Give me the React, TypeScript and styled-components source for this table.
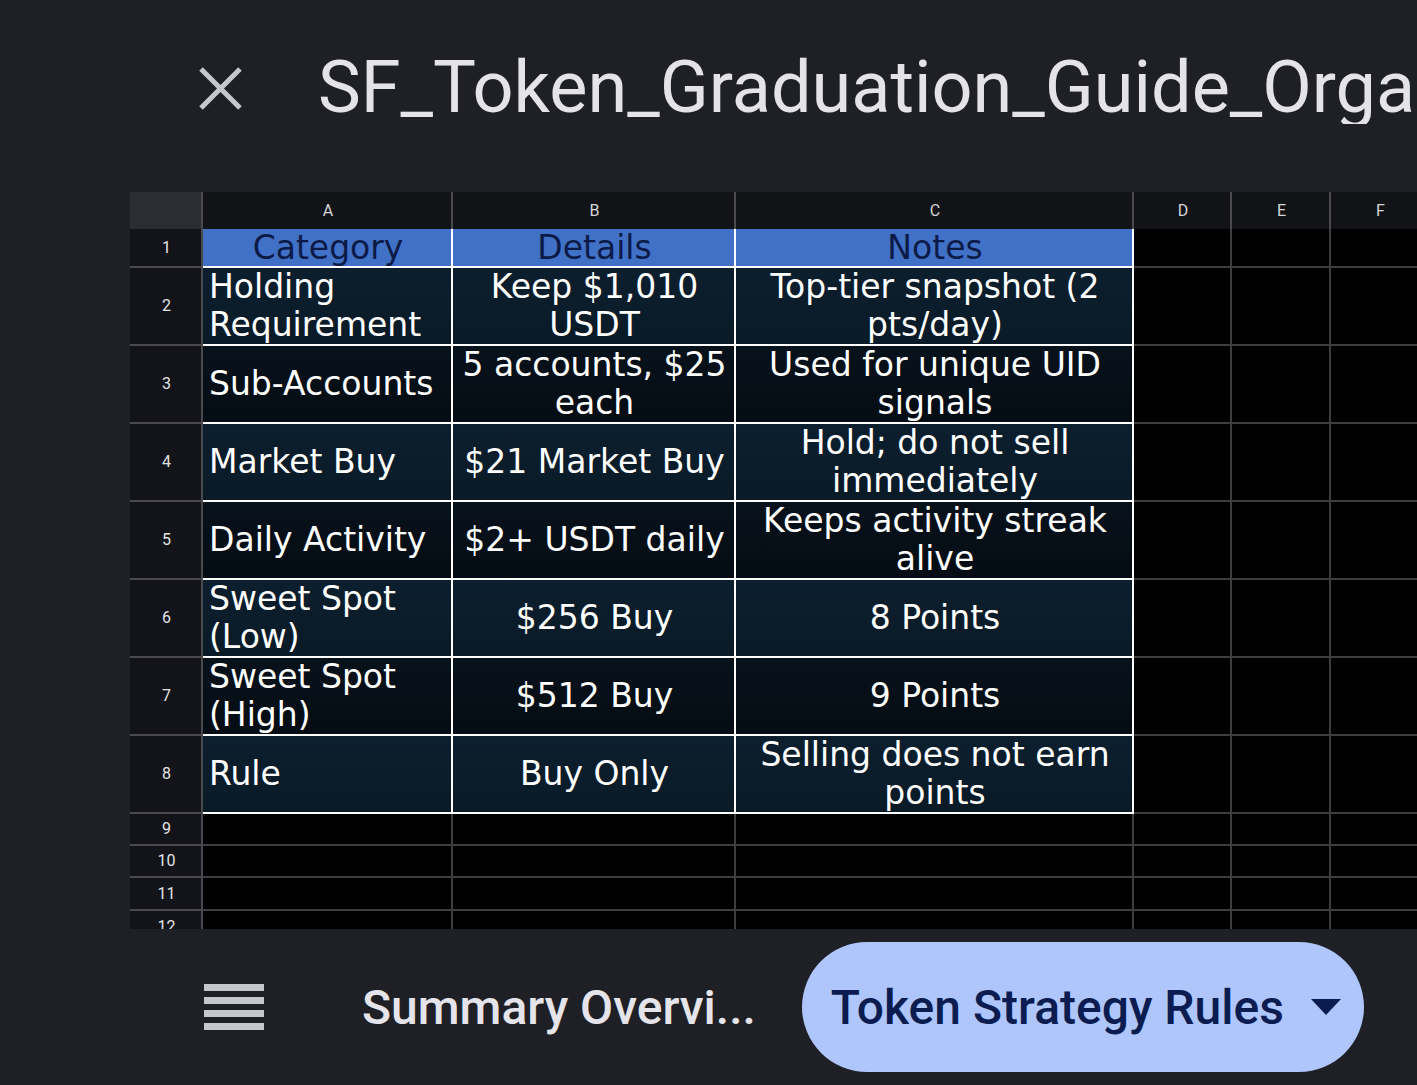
import React from "react";
import styled, { createGlobalStyle, css } from "styled-components";

const GlobalStyle = createGlobalStyle`
    html, body {
        margin: 0;
        padding: 0;
        background: #1f2025;
        overflow: hidden;
    }
    body {
        font-family: Roboto, "Liberation Sans", sans-serif;
    }
`;

const Page = styled.div`
    width: 1417px;
    height: 1085px;
    display: flex;
    flex-direction: column;
    background: #1f2025;
    overflow: hidden;
`;

const TopBar = styled.header`
    height: 192px;
    box-sizing: border-box;
    padding: 0 0 16px 198px;
    display: flex;
    align-items: center;
    gap: 75px;
    min-width: 0;
`;

const CloseIcon = styled.svg`
    flex: none;
    width: 45px;
    height: 45px;
`;

const Title = styled.h1`
    margin: 0;
    font-family: Roboto, "Liberation Sans", sans-serif;
    font-size: 72px;
    line-height: 1;
    font-weight: 400;
    color: #e3e3e8;
    white-space: nowrap;
    overflow: hidden;
    min-width: 0;
`;

const Sheet = styled.div`
    margin-left: 130px;
    height: 737px;
    overflow: hidden;
    display: grid;
    grid-template-columns: 73px 250px 283px 398px 98px 99px 99px;
    grid-template-rows: 37px 39px repeat(7, 78px) 32px 32px 33px 33px;
    background: #000;
`;

type Tone = "corner" | "colHead" | "rowHead" | "title" | "band" | "shade" | "empty";

const toneStyles: Record<Tone, ReturnType<typeof css>> = {
    corner: css`
        background: #2c2d32;
        border-right: 2px solid #4a4a4e;
    `,
    colHead: css`
        background: #121317;
        border-right: 2px solid #4a4a4e;
        font-family: Roboto, "Liberation Sans", sans-serif;
        font-size: 16px;
        color: #d6d6d8;
        justify-content: center;
    `,
    rowHead: css`
        background: #131419;
        border-right: 2px solid #4a4a4e;
        border-bottom: 2px solid #4a4a4e;
        font-family: Roboto, "Liberation Sans", sans-serif;
        font-size: 16px;
        color: #e3e3e6;
        justify-content: center;
    `,
    title: css`
        background: #4171c6;
        color: #0c1a48;
        border-right: 2px solid #fff;
        border-bottom: 2px solid #fff;
    `,
    band: css`
        background: linear-gradient(180deg, #0c1f2e, #0a1a27);
        color: #fff;
        border-right: 2px solid #fff;
        border-bottom: 2px solid #fff;
    `,
    shade: css`
        background: linear-gradient(180deg, #08121b, #050c13);
        color: #fff;
        border-right: 2px solid #fff;
        border-bottom: 2px solid #fff;
    `,
    empty: css`
        background: #000;
        border-right: 2px solid #3e3e41;
        border-bottom: 2px solid #3e3e41;
    `,
};

const Cell = styled.div<{ $tone: Tone; $align?: "left" | "center" }>`
    box-sizing: border-box;
    display: flex;
    align-items: center;
    overflow: hidden;
    font-family: "DejaVu Sans", "Liberation Sans", sans-serif;
    font-size: 33px;
    line-height: 38px;
    padding: 0 4px 0 6px;
    text-align: ${p => (p.$align === "left" ? "left" : "center")};
    justify-content: ${p => (p.$align === "left" ? "flex-start" : "center")};
    ${p => toneStyles[p.$tone]}
`;

const BottomBar = styled.footer`
    flex: 1;
    display: flex;
    align-items: center;
    padding-left: 204px;
`;

const MenuIcon = styled.div`
    flex: none;
    width: 60px;
    display: flex;
    flex-direction: column;
    gap: 6px;

    span {
        display: block;
        height: 7px;
        background: #c5c7ce;
    }
`;

const SheetName = styled.span`
    margin-left: 98px;
    font-size: 48px;
    font-weight: 500;
    color: #e4e4ea;
    white-space: nowrap;
`;

const ActiveTab = styled.div`
    margin-left: 46px;
    height: 130px;
    box-sizing: border-box;
    padding: 0 23px 0 29px;
    border-radius: 65px;
    background: #aec6fc;
    display: flex;
    align-items: center;
    gap: 27px;
    color: #0a1c50;
    font-size: 48px;
    font-weight: 500;
    white-space: nowrap;
`;

const Caret = styled.svg`
    width: 30px;
    height: 16px;
`;

const COLUMNS = ["A", "B", "C", "D", "E", "F"];

const ROWS: [string, string, string][] = [
    ["Holding Requirement", "Keep $1,010 USDT", "Top-tier snapshot (2 pts/day)"],
    ["Sub-Accounts", "5 accounts, $25 each", "Used for unique UID signals"],
    ["Market Buy", "$21 Market Buy", "Hold; do not sell immediately"],
    ["Daily Activity", "$2+ USDT daily", "Keeps activity streak alive"],
    ["Sweet Spot (Low)", "$256 Buy", "8 Points"],
    ["Sweet Spot (High)", "$512 Buy", "9 Points"],
    ["Rule", "Buy Only", "Selling does not earn points"],
];

export default function App() {
    return (
        <Page>
            <GlobalStyle />
            <TopBar>
                <CloseIcon viewBox="0 0 45 45">
                    <path d="M3 3 L42 42 M42 3 L3 42" stroke="#c5c7cd" strokeWidth="5" fill="none" />
                </CloseIcon>
                <Title>SF_Token_Graduation_Guide_Organized</Title>
            </TopBar>

            <Sheet>
                <Cell $tone="corner" />
                {COLUMNS.map((c, i) => (
                    <Cell key={"h" + i} $tone="colHead">
                        {c}
                    </Cell>
                ))}

                <Cell $tone="rowHead">1</Cell>
                <Cell $tone="title">Category</Cell>
                <Cell $tone="title">Details</Cell>
                <Cell $tone="title">Notes</Cell>
                {renderEmpty(3, "r1")}

                {ROWS.map((row, idx) => renderRow(row, idx))}

                {[9, 10, 11, 12].map(n => (
                    <React.Fragment key={"e" + n}>
                        <Cell $tone="rowHead">{n}</Cell>
                        {renderEmpty(6, "e" + n)}
                    </React.Fragment>
                ))}
            </Sheet>

            <BottomBar>
                <MenuIcon>
                    <span />
                    <span />
                    <span />
                    <span />
                </MenuIcon>
                <SheetName>Summary Overvi...</SheetName>
                <ActiveTab>
                    Token Strategy Rules
                    <Caret viewBox="0 0 30 16">
                        <path d="M0 0 H30 L15 16 Z" fill="#0a1c50" />
                    </Caret>
                </ActiveTab>
            </BottomBar>
        </Page>
    );

    function renderEmpty(count: number, key: string) {
        return Array.from({ length: count }, (_, i) => <Cell key={key + "-" + i} $tone="empty" />);
    }

    function renderRow(row: [string, string, string], idx: number) {
        const tone: Tone = idx % 2 === 0 ? "band" : "shade";
        return (
            <React.Fragment key={"row" + idx}>
                <Cell $tone="rowHead">{idx + 2}</Cell>
                <Cell $tone={tone} $align="left">
                    {row[0]}
                </Cell>
                <Cell $tone={tone}>{row[1]}</Cell>
                <Cell $tone={tone}>{row[2]}</Cell>
                {renderEmpty(3, "r" + idx)}
            </React.Fragment>
        );
    }
}
